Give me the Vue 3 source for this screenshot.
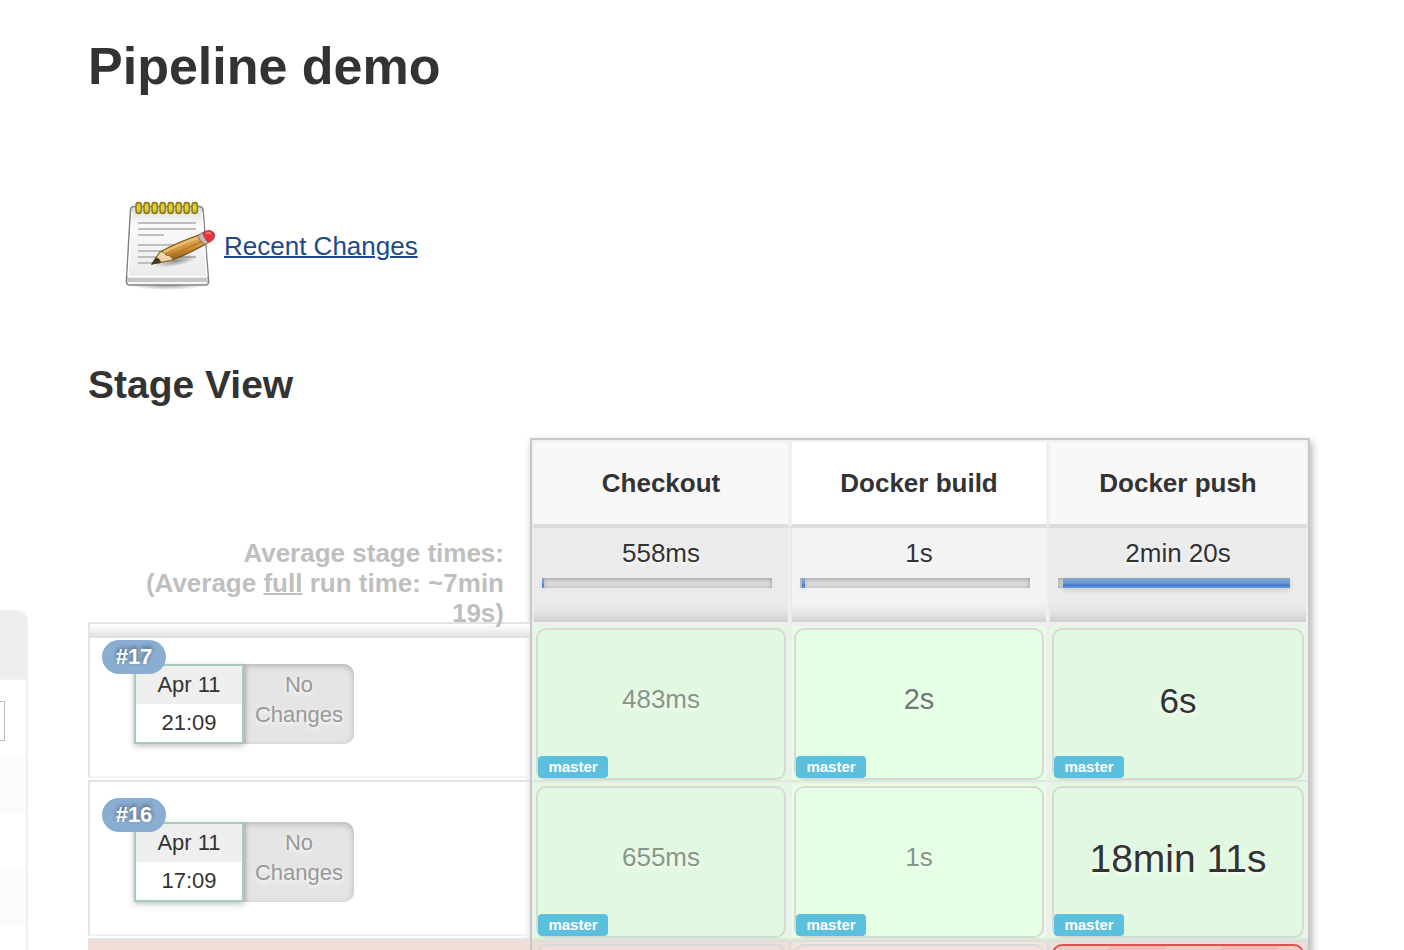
<script setup>
const stages = [
  { name: 'Checkout', average: '558ms', start: 0, fill: 1 },
  { name: 'Docker build', average: '1s', start: 1, fill: 1 },
  { name: 'Docker push', average: '2min 20s', start: 2, fill: 98 },
]

const runs = [
  { id: 17, date: 'Apr 11', time: '21:09', cells: [
    { text: '483ms', level: 0 }, { text: '2s', level: 1 }, { text: '6s', level: 2 },
  ] },
  { id: 16, date: 'Apr 11', time: '17:09', cells: [
    { text: '655ms', level: 0 }, { text: '1s', level: 0 }, { text: '18min 11s', level: 3 },
  ] },
]

const rings = [0, 1, 2, 3, 4, 5, 6, 7]
</script>

<template>
  <div class="page">
    <aside class="sidebar">
      <div class="pane">
        <div class="pane-head"></div>
        <div class="pane-search"><input class="find" type="text" aria-label="find" /></div>
        <div class="pane-row shaded"></div>
        <div class="pane-row"></div>
        <div class="pane-row shaded"></div>
        <div class="pane-row"></div>
      </div>
    </aside>

    <main class="content">
      <h1>Pipeline demo</h1>

      <div class="changes-link">
        <svg class="notepad" viewBox="0 0 96 96" aria-hidden="true">
          <defs>
            <linearGradient id="paper" x1="0" y1="0" x2="0" y2="1">
              <stop offset="0" stop-color="#dcdcdc" />
              <stop offset="0.25" stop-color="#fafafa" />
              <stop offset="1" stop-color="#e8e8e8" />
            </linearGradient>
            <linearGradient id="wood" x1="0.4" y1="0.2" x2="0.6" y2="0.8">
              <stop offset="0" stop-color="#e2ae5c" />
              <stop offset="0.5" stop-color="#d0913a" />
              <stop offset="1" stop-color="#8c5a18" />
            </linearGradient>
            <linearGradient id="ring" x1="0" y1="0" x2="0" y2="1">
              <stop offset="0" stop-color="#c9b417" />
              <stop offset="0.5" stop-color="#e6d63c" />
              <stop offset="1" stop-color="#c2ac12" />
            </linearGradient>
            <radialGradient id="shade">
              <stop offset="0" stop-color="#000" stop-opacity="0.4" />
              <stop offset="1" stop-color="#000" stop-opacity="0" />
            </radialGradient>
          </defs>
          <ellipse cx="47" cy="87" rx="38" ry="5" fill="url(#shade)" />
          <path d="M14 8.500H79Q82.500 8.500 83 12L88.500 82Q89 87 86 87H9Q6 87 6.500 82L10.500 12Q11 8.500 14 8.500Z" fill="url(#paper)" stroke="#858585" stroke-width="1.600" />
          <path d="M12 14L8 78M82 14L87 78" fill="none" stroke="#fff" stroke-width="1.200" />
          <path d="M8 80H87L87.500 84H7.500Z" fill="#c6c6c6" />
          <path d="M8 78.500H87M8 85H87" stroke="#fafafa" stroke-width="1.500" />
          <path d="M18 25H76M18 31H76M18 37H44M18 47H66M18 53H52M18 59H46M60 59H76M18 65H40" stroke="#bdbdbd" stroke-width="1.800" />
          <ellipse cx="56" cy="63" rx="22" ry="5" fill="url(#shade)" transform="rotate(-12 56 63)" />
          <rect v-for="n in rings" :key="n" :x="16 + n * 8" y="4.500" width="5.400" height="11" rx="2.700" fill="url(#ring)" stroke="#8c7a10" stroke-width="1.500" />
          <path d="M32 66L40 54Q58 44 79 37L86 46Q70 55 53 62Z" fill="url(#wood)" stroke="#7a5220" stroke-width="1.200" />
          <path d="M32 66L40 54Q45 53 46 57Q51 57 53 62Z" fill="#efd6a6" stroke="#8a6028" stroke-width="1" />
          <path d="M31 66.500L36 59.500Q40 60 41 64.500Z" fill="#4a361c" />
          <path d="M44 54Q62 45 79 39.500" fill="none" stroke="#eec078" stroke-width="2" />
          <path d="M50 58Q66 51 82 43" fill="none" stroke="#ad7526" stroke-width="1.200" />
          <path d="M78 37L83 34.500Q88 39 88.500 44.500L85 46.500Q79 43 78 37Z" fill="#c9b4b8" stroke="#8c6f6a" stroke-width="1" />
          <path d="M83 34.500Q88 32 91 33Q95 35 94.500 38Q94 42 88.500 44.500Q84 40 83 34.500Z" fill="#ee2f3d" stroke="#a8483c" stroke-width="1.200" />
          <path d="M86 35.500Q89 34 91 36" fill="none" stroke="#ff7a82" stroke-width="1.500" />
        </svg>
        <a href="#changes">Recent Changes</a>
      </div>

      <h2>Stage View</h2>

      <section class="stage-view">
        <div class="run-column">
          <div class="average-label">
            <div>Average stage times:</div>
            <div>(Average <u>full</u> run time: ~7min 19s)</div>
          </div>
          <div v-for="run in runs" :key="run.id" class="run">
            <span class="badge">#{{ run.id }}</span>
            <div class="run-info">
              <div class="stamp">
                <div class="date">{{ run.date }}</div>
                <div class="time">{{ run.time }}</div>
              </div>
              <div class="no-changes">No<br />Changes</div>
            </div>
          </div>
          <div class="run failed"></div>
        </div>

        <div class="table-frame">
          <table>
            <colgroup>
              <col class="stage-col" />
              <col class="stage-col" />
              <col />
            </colgroup>
            <thead>
              <tr>
                <th v-for="s in stages" :key="s.name" scope="col">{{ s.name }}</th>
              </tr>
            </thead>
            <tbody>
              <tr class="averages">
                <td v-for="s in stages" :key="s.name">
                  <div class="average">{{ s.average }}</div>
                  <div class="bar">
                    <div class="bar-fill" :style="{ marginLeft: s.start + '%', width: s.fill + '%' }"></div>
                  </div>
                </td>
              </tr>
              <tr v-for="run in runs" :key="run.id" class="result">
                <td v-for="(c, i) in run.cells" :key="i">
                  <div class="cell">
                    <span class="duration" :class="'level-' + c.level">{{ c.text }}</span>
                    <span class="node">master</span>
                  </div>
                </td>
              </tr>
              <tr class="result failed-result">
                <td><div class="cell"></div></td>
                <td><div class="cell"></div></td>
                <td><div class="cell error"></div></td>
              </tr>
            </tbody>
          </table>
        </div>
      </section>
    </main>
  </div>
</template>

<style>
body {
  background: #fff;
}
</style>

<style scoped>
.page,
.page * {
  box-sizing: border-box;
}
.page {
  display: flex;
  height: 100vh;
  overflow: hidden;
  color: #333;
  font-family: "Liberation Sans", Arial, Helvetica, sans-serif;
  font-size: 26px;
  line-height: 30px;
}
.sidebar {
  flex: 0 0 28px;
  padding-top: 610px;
}
.pane {
  border: 2px solid #f0f0f0;
  border-left: 0;
  border-radius: 0 10px 0 0;
  overflow: hidden;
}
.pane-head {
  height: 68px;
  border-bottom: 2px solid #f2f2f2;
  background: #eee;
}
.pane-search {
  height: 78px;
  padding-top: 21px;
}
.find {
  display: block;
  width: 5px;
  height: 40px;
  padding: 0;
  border: 1px solid #bbb;
  border-left: 0;
  background: #fff;
}
.pane-row {
  height: 56px;
}
.shaded {
  background: #fbfbfb;
}
.content {
  flex: 1;
  min-width: 0;
  padding: 36px 94px 0 60px;
}
h1,
h2 {
  margin: 0;
  font-weight: bold;
}
h1 {
  font-size: 52px;
  line-height: 60px;
}
h2 {
  margin-top: 68px;
  font-size: 39px;
  line-height: 46px;
}
.changes-link {
  display: flex;
  align-items: center;
  gap: 8px;
  margin-top: 102px;
  padding-left: 32px;
}
.notepad {
  width: 96px;
  height: 96px;
}
a {
  color: #204a87;
  text-decoration-thickness: 2px;
}
.stage-view {
  display: flex;
  margin-top: 30px;
}
.run-column {
  flex: 0 0 442px;
}
.average-label {
  position: relative;
  z-index: 1;
  height: 184px;
  padding: 100px 26px 0 50px;
  color: #bfbfbf;
  font-weight: bold;
  text-align: right;
}
u {
  text-decoration-thickness: 2px;
}
.run {
  position: relative;
  height: 156px;
  margin-bottom: 2px;
  padding: 40px 0 0 44px;
  border: 2px solid #e4e4e4;
  border-right: 0;
  border-bottom-color: #f2f2f2;
}
.average-label + .run {
  background: linear-gradient(#fff, #e0e0e0) top / 100% 14px no-repeat;
}
.run.failed {
  background: #f0ddd8;
}
.badge {
  position: absolute;
  top: 16px;
  left: 12px;
  z-index: 1;
  min-width: 64px;
  padding: 2px 12px;
  border-radius: 17px;
  background: #8aadd2;
  color: #fff;
  font-size: 22px;
  font-weight: bold;
  text-align: center;
  text-shadow: 0 -2px 4px rgba(0, 0, 0, 0.45);
}
.run-info {
  display: flex;
  height: 80px;
  font-size: 22px;
  text-align: center;
}
.stamp {
  position: relative;
  width: 110px;
  border: 2px solid #a3cdb8;
  background: #fff;
  box-shadow: 0 2px 6px rgba(0, 0, 0, 0.25);
  line-height: 38px;
}
.date {
  background: #efefef;
}
.no-changes {
  width: 110px;
  padding-top: 6px;
  border-radius: 0 10px 10px 0;
  background: #e5e5e5;
  box-shadow: inset 0 2px 6px rgba(0, 0, 0, 0.22);
  color: #999;
  text-shadow: 0 2px 4px #fff;
}
.table-frame {
  flex: 1;
  border: 2px solid #c8c8c8;
  box-shadow: 2px 4px 8px rgba(0, 0, 0, 0.3);
}
table {
  width: 100%;
  table-layout: fixed;
  border-collapse: separate;
  border-spacing: 0;
}
.stage-col {
  width: 33.25%;
}
th,
td {
  padding: 0;
  border: 2px solid #f0f0f0;
  text-align: center;
}
th {
  height: 88px;
  border-bottom: 4px solid #ddd;
  background: #f8f8f8;
}
th:nth-child(2) {
  background: #fff;
}
.averages td {
  height: 96px;
  padding: 10px 16px 0 8px;
  border-top: 0;
  border-left-color: #ebebeb;
  background: linear-gradient(#ebebeb 76px, #e3e3e3 84px, #cecece 94px);
  vertical-align: top;
}
.averages td:nth-child(2) {
  background: linear-gradient(#f3f3f3 76px, #e9e9e9 84px, #d3d3d3 94px);
}
.average {
  padding-left: 8px;
  text-shadow: 0 2px 4px #fff;
}
.bar {
  height: 10px;
  margin-top: 10px;
  background: #dcdcdc;
  box-shadow: inset 0 1px 5px rgba(0, 0, 0, 0.3);
}
.bar-fill {
  height: 10px;
  background: linear-gradient(#85a9d1, #6393d2 60%, #4070cf 70%, #5c98dc 90%);
  box-shadow: 0 2px 5px rgba(0, 0, 0, 0.15);
}
.result td {
  padding: 2px 2px 0;
  border-color: #eee;
  border-bottom-color: #d5ecd5;
  background: #e1f8e1;
}
.result td:nth-child(2) {
  background: #e5ffe5;
}
.cell {
  position: relative;
  display: flex;
  align-items: center;
  justify-content: center;
  height: 152px;
  border: 2px solid #d8d8d8;
  border-radius: 10px;
}
.duration {
  padding-bottom: 10px;
  text-shadow: 0 2px 4px #fff;
}
.level-0 {
  color: #889688;
}
.level-1 {
  color: #6d796d;
  font-size: 29px;
}
.level-2 {
  padding-bottom: 6px;
  font-size: 35px;
}
.level-3 {
  padding-bottom: 6px;
  font-size: 39px;
}
.node {
  position: absolute;
  bottom: 0;
  left: 0;
  min-width: 70px;
  border-radius: 4px;
  background: #5bc0de;
  color: #fff;
  font-size: 15px;
  font-weight: bold;
  line-height: 22px;
  text-align: center;
}
.result.failed-result td {
  border-color: #dedede;
  background: #f0ddd8;
}
.result.failed-result td:nth-child(2) {
  background: #f6e2dc;
}
.error {
  border-color: #d9534f;
  background: repeating-linear-gradient(135deg, #f0c9c0 0 40px, #f2b8b4 40px 80px);
}
</style>
